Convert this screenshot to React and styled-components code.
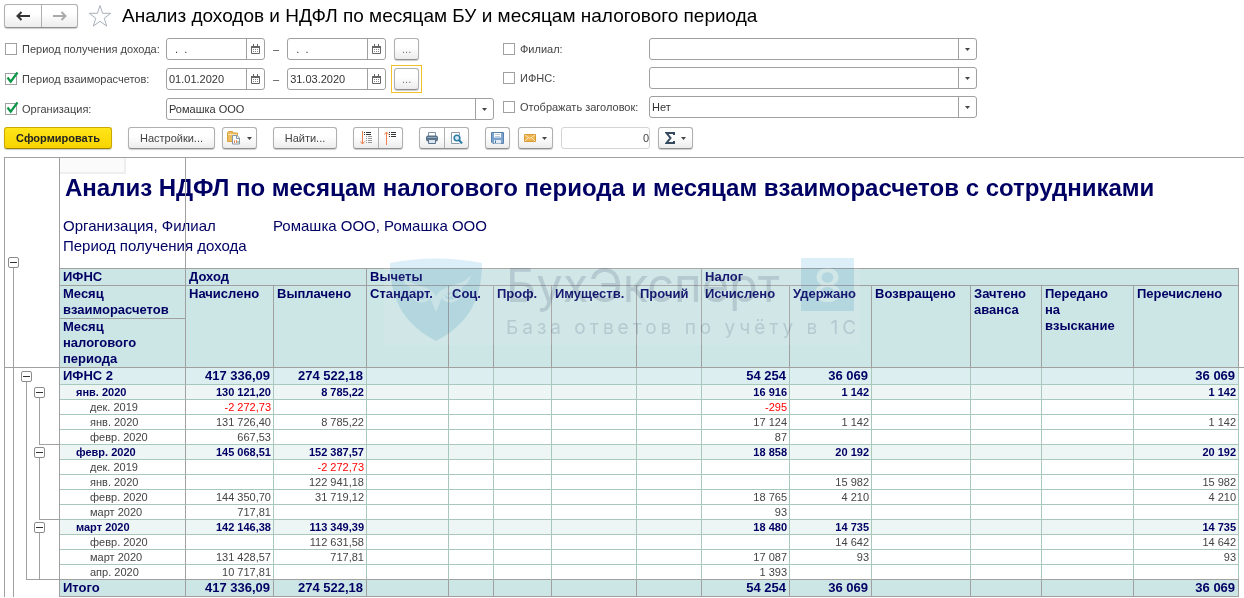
import React, { useState } from 'react';
import styled, { createGlobalStyle, css } from 'styled-components';

const GlobalStyle = createGlobalStyle`
    *, *::before, *::after {
        box-sizing: border-box;
    }

    body {
        margin: 0;
        background: #fff;
        color: #444;
        font-family: "Liberation Sans", Arial, sans-serif;
        font-size: 11px;
    }

    button, input, select {
        font: inherit;
        color: inherit;
        margin: 0;
        padding: 0;
    }
`;

const line = '#a0a0a0';
const cellLine = '#a9c8bc';
const navy = '#000064';

const Page = styled.main`
    min-height: 100vh;
    padding: 4px 0 0 4px;
`;

const TitleBar = styled.header`
    display: flex;
    align-items: center;
    height: 24px;
`;

const raised = css`
    border: 1px solid #b0b0b0;
    border-bottom-color: #8f8f8f;
    border-radius: 3px;
    background: linear-gradient(#fff 40%, #ececec);
    box-shadow: 0 1px 1px rgba(0, 0, 0, 0.2);
`;

const ButtonGroup = styled.div`
    ${raised}
    display: flex;
    height: ${({ $tall }) => ($tall ? 24 : 22)}px;

    button {
        display: flex;
        align-items: center;
        justify-content: center;
        width: ${({ $tall }) => ($tall ? 36 : 24)}px;
        border: 0;
        background: none;
    }

    button + button {
        border-left: 1px solid #b0b0b0;
    }
`;

const StarButton = styled.button`
    display: flex;
    margin: 0 10px;
    border: 0;
    background: none;
`;

const PageTitle = styled.h1`
    margin: 0;
    color: #000;
    font-size: 19px;
    font-weight: 400;
    line-height: 24px;
    white-space: nowrap;
`;

const Filters = styled.form`
    display: grid;
    grid-template-columns: 489fr 474fr;
    column-gap: 9px;
    max-width: 973px;
    padding: 10px 0 0 1px;
`;

const FilterColumn = styled.div`
    display: flex;
    flex-direction: column;
    gap: ${({ $gap }) => $gap}px;
`;

const FilterRow = styled.div`
    display: grid;
    grid-template-columns: ${({ $label }) => $label}px 1fr;
    align-items: center;
    height: 22px;
`;

const CheckLabel = styled.label`
    position: relative;
    display: flex;
    align-items: center;
    gap: 5px;
    white-space: nowrap;

    input {
        appearance: none;
        width: 12px;
        height: 12px;
        border: 1px solid ${line};
        background: #fff;
    }

    svg {
        position: absolute;
        left: 0;
        top: -2px;
        display: none;
        pointer-events: none;
    }

    input:checked ~ svg {
        display: block;
    }
`;

const Period = styled.div`
    display: flex;
    align-items: center;
    gap: 8px;
`;

const Box = styled.div`
    position: relative;
    display: flex;
    width: ${({ $width }) => $width || '100%'};
    height: 22px;
    border: 1px solid ${line};
    border-radius: 3px;
    background: #fff;
    color: #333;

    input,
    select {
        flex: 1;
        width: 0;
        min-width: 0;
        padding: 0 2px;
        border: 0;
        outline: 0;
        background: none;
    }

    select {
        appearance: none;
    }

    button {
        display: flex;
        align-items: center;
        justify-content: center;
        width: 18px;
        border: 0;
        border-left: 1px solid ${line};
        background: none;
    }
`;

const SelectArrow = styled.span`
    position: absolute;
    top: 0;
    right: 0;
    bottom: 0;
    display: flex;
    align-items: center;
    justify-content: center;
    width: 18px;
    border-left: 1px solid ${line};
    pointer-events: none;
`;

const Button = styled.button`
    ${raised}
    position: relative;
    display: flex;
    align-items: center;
    justify-content: center;
    gap: 6px;
    width: ${({ $width }) => $width}px;
    height: 22px;
    white-space: nowrap;
`;

const PickButton = styled(Button)`
    color: #777;
    line-height: 20px;

    &::after {
        content: '';
        position: absolute;
        inset: -4px;
        display: ${({ $focused }) => ($focused ? 'block' : 'none')};
        border: 1px solid #f2c029;
    }
`;

const PrimaryButton = styled(Button)`
    border-color: #c9a800;
    border-bottom-color: #9c8200;
    background: linear-gradient(#ffe51a, #f7d400);
    color: #222;
    font-weight: 700;
`;

const Toolbar = styled.div`
    display: flex;
    align-items: center;
    gap: ${({ $gap }) => $gap || 16}px;
    padding: ${({ $gap }) => ($gap ? 0 : '7px 0 8px')};
`;

const SumInput = styled.input`
    width: 89px;
    height: 22px;
    border: 1px solid #d4d4d4;
    border-radius: 3px;
    text-align: right;
`;

const Sheet = styled.section`
    display: flex;
    border-top: 1px solid ${line};
    border-left: 1px solid ${line};
`;

const Gutter = styled.div`
    display: flex;
    flex: none;
    flex-direction: column;
    width: 55px;
    border-right: 1px solid ${line};
`;

const GutterHead = styled.div`
    display: flex;
    flex-direction: column;
    height: 210px;
    padding: 99px 0 0 3px;
    border-bottom: 1px solid ${line};
`;

const Stem = styled.div`
    display: flex;
    flex: 1;
    flex-direction: column;
    margin-left: 5px;
    padding-left: 7px;
    border-left: 1px solid ${line};
    border-bottom: ${({ $foot }) => ($foot ? `1px solid ${line}` : 0)};
`;

const GutterBody = styled(Stem)`
    margin-left: 8px;
`;

const Branch = styled.div`
    display: flex;
    flex-direction: column;
    height: ${({ $height }) => $height}px;
    padding-top: ${({ $top }) => $top}px;
`;

const Nested = styled.div`
    padding-top: 3px;
`;

const Toggle = styled.button`
    display: flex;
    flex: none;
    align-items: center;
    justify-content: center;
    width: 11px;
    height: 11px;
    border: 1px solid #8c8c8c;
    border-radius: 2px;
    background: #fff;

    &::before {
        content: '';
        width: 7px;
        height: 1px;
        background: #333;
    }
`;

const Report = styled.div`
    position: relative;
    flex: 1;
    min-width: 0;
`;

const ReportHead = styled.div`
    position: relative;
    height: 110px;
    color: ${navy};
    white-space: nowrap;

    &::after {
        content: '';
        position: absolute;
        top: 0;
        bottom: 0;
        left: 125px;
        border-left: 1px solid ${line};
    }
`;

const ActiveCell = styled.div`
    width: 66px;
    height: 16px;
    border: solid #eee;
    border-width: 0 2px 2px 0;
    background: #fbfbfb;
`;

const ReportTitle = styled.h2`
    margin: 0;
    padding-left: 5px;
    font-size: 24px;
    line-height: 28px;
`;

const Params = styled.dl`
    display: grid;
    grid-template-columns: 210px 1fr;
    margin: 0;
    padding: 14px 0 0 3px;
    font-size: 15px;
    line-height: 20px;

    dt, dd {
        margin: 0;
    }
`;

const Table = styled.table`
    width: 100%;
    border-collapse: separate;
    border-spacing: 0;
    table-layout: fixed;
    color: ${navy};

    th, td {
        padding: 0 2px 0 3px;
        border: 0 solid ${cellLine};
        border-width: 0 1px 1px 0;
        white-space: nowrap;
    }
`;

const Col = styled.col`
    width: ${({ $width }) => $width}px;
`;

const Head = styled.thead`
    font-size: 13px;
    line-height: 16px;
    text-align: left;

    tr:first-child { height: 18px; }
    tr:nth-child(2) { height: 33px; }
    tr:nth-child(3) { height: 49px; }

    && th {
        padding-right: 0;
        border-color: ${line};
        background: #cce5e5;
        vertical-align: top;
        white-space: pre-line;
    }

    tr:first-child th {
        border-top-width: 1px;
    }

    && td {
        border-width: 0 0 1px;
        border-color: ${line};
    }
`;

const levels = {
    group: css`
        height: 17px;
        background: #ddeef0;
        font-size: 13px;
        font-weight: 700;
        line-height: 16px;
    `,
    month: css`
        height: 15px;
        background: #edf6f5;
        font-weight: 700;
        line-height: 14px;
    `,
    item: css`
        height: 15px;
        color: #444;
        line-height: 14px;
    `,
    total: css`
        height: 17px;
        background: #cce5e5;
        font-size: 13px;
        font-weight: 700;
        line-height: 16px;
    `,
};

const indents = { group: 3, month: 16, item: 30, total: 3 };

const Row = styled.tr`
    ${({ $level }) => levels[$level]}

    && th {
        padding-left: ${({ $level }) => indents[$level]}px;
        border-right-color: ${line};
        font-weight: inherit;
        text-align: left;
    }

    && td {
        padding-right: ${({ $level }) => ($level === 'group' || $level === 'total' ? 3 : 2)}px;
        text-align: right;
    }

    &&:nth-last-child(-n + 2) th,
    &&:nth-last-child(-n + 2) td {
        border-bottom-color: ${line};
    }

    &&:last-child td {
        border-right-color: ${line};
    }
`;

const Value = styled.td`
    color: ${({ $negative }) => ($negative ? '#f00' : 'inherit')};
`;

const Watermark = styled.div`
    position: absolute;
    top: 92px;
    left: 324px;
    display: flex;
    gap: 24px;
    width: 476px;
    height: 95px;
    padding: 8px 6px;
    background: rgba(255, 255, 255, 0.1);
    pointer-events: none;

    > * {
        mix-blend-mode: multiply;
    }

    > svg {
        flex: none;
    }
`;

const WatermarkText = styled.div`
    flex: 1;
    min-width: 0;
    color: #dcdfe6;
    font-family: Inter, sans-serif;
    white-space: nowrap;
`;

const Brand = styled.div`
    display: flex;
    justify-content: space-between;
    height: 53px;
    font-size: 47px;
    font-weight: 400;
    line-height: 53px;

    b {
        width: 53px;
        background: #dceef7;
        color: #fff;
        font-weight: 500;
        text-align: center;
    }
`;

const Slogan = styled.div`
    padding-top: 4px;
    font-size: 19px;
    line-height: 26px;
    letter-spacing: 4px;
`;

const CalendarIcon = () => (
    <svg width="9" height="10" viewBox="0 0 9 10" fill="none">
        <path d="M.5 2.500h8v7h-8z" fill="#fff" stroke="#666" />
        <path d="M0 2h9v2H0z" fill="#666" />
        <path d="M2.500 0v2M6.500 0v2" stroke="#666" />
        <path d="M2 5.500h5M2 7.500h5" stroke="#888" strokeDasharray="1 1" />
    </svg>
);

const ArrowDown = () => (
    <svg width="5" height="4" viewBox="0 0 5 4">
        <path d="M0 1h5L2.500 4z" fill="#444" />
    </svg>
);

const NavArrow = ({ color, flip }) => (
    <svg width="14" height="10" viewBox="0 0 14 10" fill="none" stroke={color} strokeWidth="2">
        {flip ? <path d="M0 5h12M8.500 1l4 4-4 4" /> : <path d="M14 5H2M5.500 1l-4 4 4 4" />}
    </svg>
);

const StarIcon = () => (
    <svg width="24" height="24" viewBox="0 0 24 24" fill="none" stroke="#a9b0b8">
        <path d="M12 1.500l2.600 7.800h8.200l-6.600 4.900 2.500 7.900-6.700-4.800-6.700 4.800 2.500-7.900-6.600-4.900h8.200z" />
    </svg>
);

const CheckIcon = () => (
    <svg width="14" height="14" viewBox="0 0 14 14" fill="none">
        <path d="M2.500 6.500l3.200 4.200L12.500 1.500" stroke="#0c9648" strokeWidth="2.200" />
    </svg>
);

const PasteIcon = () => (
    <svg width="14" height="14" viewBox="0 0 14 14" fill="none">
        <path d="M.5 1.500l1-1h4l1 1.500h4v8.500H.5z" fill="#edbd62" stroke="#d9a23f" />
        <path d="M1 3.500h9" stroke="#fbe3b0" />
        <path d="M5.500 4.500h4.500l2.500 2.500v6H5.500z" fill="#fff" stroke="#8797a8" />
        <path d="M9.500 4.500v3h3" stroke="#8797a8" />
        <path d="M7.500 12V9.500" stroke="#e07c50" />
        <path d="M9.500 12V9" stroke="#e58a60" />
        <path d="M11 12v-2" stroke="#5a9b58" />
    </svg>
);

const ExpandIcon = () => (
    <svg width="12" height="14" viewBox="0 0 12 14" fill="none">
        <path d="M2.500 0v13M.5 10.500l2 2.500 2-2.500" stroke="#f08050" />
        <path d="M4 1.500h1M6 1.500h5M4 3.500h1M6 3.500h5" stroke="#333" />
        <path d="M6 5.500h1M8 5.500h4M6 7.500h1M8 7.500h4M6 9.500h1M8 9.500h4M6 11.500h1M8 11.500h4" stroke="#999" />
    </svg>
);

const CollapseIcon = () => (
    <svg width="13" height="14" viewBox="0 0 13 14" fill="none">
        <path d="M2.500 14V1M.5 3.500l2-2.500 2 2.500" stroke="#f08050" />
        <path d="M5 1.500h1M7 1.500h5M5 3.500h1M7 3.500h5M5 5.500h1M7 5.500h5" stroke="#333" />
    </svg>
);

const PrintIcon = () => (
    <svg width="12" height="12" viewBox="0 0 12 12" fill="none">
        <path d="M2.500 4V.5h7V4" fill="#fff" stroke="#7d92a5" />
        <rect y="3.500" width="12" height="6" rx="2" fill="#5b748b" />
        <path d="M1.500 5.500h9" stroke="#8fa5b8" />
        <path d="M2.500 7.500h7v4h-7z" fill="#dbe5ee" stroke="#5b748b" />
    </svg>
);

const PreviewIcon = () => (
    <svg width="13" height="12" viewBox="0 0 13 12" fill="none">
        <path d="M9.500 3V.5h-8v11h8" fill="#fff" stroke="#8a9bab" />
        <circle cx="7" cy="6" r="2.800" fill="#d4ecf7" stroke="#2b7ca5" strokeWidth="1.600" />
        <path d="M9 8l3 3.500" stroke="#2b7ca5" strokeWidth="2" />
    </svg>
);

const SaveIcon = () => (
    <svg width="13" height="12" viewBox="0 0 13 12" fill="none">
        <path d="M.5.5h12v11H2l-1.500-1.500z" fill="#7ba3cf" stroke="#5b82ad" />
        <path d="M3 1h7v4.500H3z" fill="#fff" />
        <path d="M4 2.500h5M4 4.500h5" stroke="#bccada" />
        <path d="M3 8h7v3.500H3z" fill="#e4ebf2" />
        <path d="M4.500 8.500v2.500" stroke="#47709d" />
    </svg>
);

const MailIcon = () => (
    <svg width="12" height="8" viewBox="0 0 12 8" fill="none">
        <path d="M.5.5h11v7H.5z" fill="#f0b44f" stroke="#d79a38" />
        <path d="M1 1l5 3.500L11 1M1 7l3.500-3.500M11 7L7.500 3.500" stroke="#fce5b8" />
    </svg>
);

const SigmaIcon = () => (
    <svg width="10" height="12" viewBox="0 0 10 12" fill="none">
        <path d="M9 3V1H1.500l4 5-4 5H9V9" stroke="#34495e" strokeWidth="2" />
    </svg>
);

const OwlShield = () => (
    <svg width="92" height="84" viewBox="0 0 92 84">
        <path d="M0 5C29-1 63-1 92 5c0 40-17 63-46 78C17 68 0 45 0 5z" fill="#dceef7" />
        <g fill="none" stroke="#f4fafd" strokeWidth="3">
            <path d="M22 29c-2 8 3 14 10 14 5 0 8-4 7-8M70 29c2 8-3 14-10 14-5 0-8-4-7-8" />
            <circle cx="33" cy="35" r="3" strokeWidth="2" />
            <circle cx="59" cy="35" r="3" strokeWidth="2" />
        </g>
        <path
            d="M11 17c6 8 15 9 23 12 6 2 10 5 12 9 2-4 6-7 12-9 8-3 17-4 23-12-2 11-12 14-21 17-6 2-8 4-9 8l-5 12-5-12c-1-4-3-6-9-8-9-3-19-6-21-17z"
            fill="#f4fafd"
        />
    </svg>
);

const columns = [126, 88, 93, 82, 45, 58, 85, 65, 88, 82, 99, 71, 92, 105, 5];

const headings = [
    'Начислено', 'Выплачено', 'Стандарт.', 'Соц.', 'Проф.', 'Имуществ.', 'Прочий',
    'Исчислено', 'Удержано', 'Возвращено', 'Зачтено\nаванса', 'Передано\nна\nвзыскание', 'Перечислено',
];

// accrued, paid, calculated, withheld, transferred
const rows = [
    ['group', 'ИФНС 2', '417 336,09', '274 522,18', '54 254', '36 069', '36 069'],
    ['month', 'янв. 2020', '130 121,20', '8 785,22', '16 916', '1 142', '1 142'],
    ['item', 'дек. 2019', '-2 272,73', '', '-295', '', ''],
    ['item', 'янв. 2020', '131 726,40', '8 785,22', '17 124', '1 142', '1 142'],
    ['item', 'февр. 2020', '667,53', '', '87', '', ''],
    ['month', 'февр. 2020', '145 068,51', '152 387,57', '18 858', '20 192', '20 192'],
    ['item', 'дек. 2019', '', '-2 272,73', '', '', ''],
    ['item', 'янв. 2020', '', '122 941,18', '', '15 982', '15 982'],
    ['item', 'февр. 2020', '144 350,70', '31 719,12', '18 765', '4 210', '4 210'],
    ['item', 'март 2020', '717,81', '', '93', '', ''],
    ['month', 'март 2020', '142 146,38', '113 349,39', '18 480', '14 735', '14 735'],
    ['item', 'февр. 2020', '', '112 631,58', '', '14 642', '14 642'],
    ['item', 'март 2020', '131 428,57', '717,81', '17 087', '93', '93'],
    ['item', 'апр. 2020', '10 717,81', '', '1 393', '', ''],
    ['total', 'Итого', '417 336,09', '274 522,18', '54 254', '36 069', '36 069'],
];

const Check = ({ children, defaultChecked }) => (
    <CheckLabel>
        <input type="checkbox" defaultChecked={defaultChecked} />
        {children}
        <CheckIcon />
    </CheckLabel>
);

const DateField = ({ label, initial }) => {
    const [value, setValue] = useState(initial);

    return (
        <Box $width="99px">
            <input aria-label={label} value={value} onChange={(e) => setValue(e.target.value)} />
            <button type="button" aria-label="Выбрать дату"><CalendarIcon /></button>
        </Box>
    );
};

const SelectField = ({ label, value = '' }) => (
    <Box>
        <select aria-label={label} defaultValue={value}>
            <option value={value}>{value}</option>
        </select>
        <SelectArrow><ArrowDown /></SelectArrow>
    </Box>
);

const PeriodRow = ({ label, from, to, checked, focused }) => (
    <FilterRow $label={161}>
        <Check defaultChecked={checked}>{label}</Check>
        <Period>
            <DateField label={`${label} с`} initial={from} />
            <span>–</span>
            <DateField label={`${label} по`} initial={to} />
            <PickButton type="button" $width={25} $focused={focused}>...</PickButton>
        </Period>
    </FilterRow>
);

const Outline = () => (
    <Gutter>
        <GutterHead>
            <Toggle aria-label="Свернуть отчет" />
            <Stem />
        </GutterHead>
        <GutterBody>
            <Branch $height={212} $top={3}>
                <Toggle aria-label="Свернуть ИФНС 2" />
                <Stem $foot>
                    <Nested>
                        <Branch $height={60} $top={2}>
                            <Toggle aria-label="Свернуть янв. 2020" />
                            <Stem $foot />
                        </Branch>
                        <Branch $height={75} $top={2}>
                            <Toggle aria-label="Свернуть февр. 2020" />
                            <Stem $foot />
                        </Branch>
                        <Branch $height={59} $top={2}>
                            <Toggle aria-label="Свернуть март 2020" />
                            <Stem />
                        </Branch>
                    </Nested>
                </Stem>
            </Branch>
        </GutterBody>
    </Gutter>
);

const ReportTable = () => (
    <Table>
        <colgroup>
            {columns.map((width, i) => <Col key={i} $width={width} />)}
        </colgroup>
        <Head>
            <tr>
                <th>ИФНС</th>
                <th colSpan={2}>Доход</th>
                <th colSpan={5}>Вычеты</th>
                <th colSpan={6}>Налог</th>
                <td rowSpan={3} />
            </tr>
            <tr>
                <th>{'Месяц\nвзаиморасчетов'}</th>
                {headings.map((text) => <th key={text} rowSpan={2}>{text}</th>)}
            </tr>
            <tr>
                <th>{'Месяц\nналогового\nпериода'}</th>
            </tr>
        </Head>
        <tbody>
            {rows.map(([level, name, accrued, paid, calculated, withheld, transferred], i) => (
                <Row key={i} $level={level}>
                    <th scope="row">{name}</th>
                    {[accrued, paid, '', '', '', '', '', calculated, withheld, '', '', '', transferred].map((value, j) => (
                        <Value key={j} $negative={value.startsWith('-')}>{value}</Value>
                    ))}
                </Row>
            ))}
        </tbody>
    </Table>
);

const App = () => (
    <Page>
        <GlobalStyle />
        <TitleBar>
            <ButtonGroup $tall>
                <button type="button" aria-label="Назад"><NavArrow color="#333" /></button>
                <button type="button" aria-label="Вперед"><NavArrow color="#aaa" flip /></button>
            </ButtonGroup>
            <StarButton type="button" aria-label="В избранное"><StarIcon /></StarButton>
            <PageTitle>Анализ доходов и НДФЛ по месяцам БУ и месяцам налогового периода</PageTitle>
        </TitleBar>

        <Filters>
            <FilterColumn $gap={8}>
                <PeriodRow label="Период получения дохода:" from="  .  ." to="  .  ." />
                <PeriodRow label="Период взаиморасчетов:" from="01.01.2020" to="31.03.2020" checked focused />
                <FilterRow $label={161}>
                    <Check defaultChecked>Организация:</Check>
                    <SelectField label="Организация" value="Ромашка ООО" />
                </FilterRow>
            </FilterColumn>
            <FilterColumn $gap={7}>
                <FilterRow $label={146}>
                    <Check>Филиал:</Check>
                    <SelectField label="Филиал" />
                </FilterRow>
                <FilterRow $label={146}>
                    <Check>ИФНС:</Check>
                    <SelectField label="ИФНС" />
                </FilterRow>
                <FilterRow $label={146}>
                    <Check>Отображать заголовок:</Check>
                    <SelectField label="Отображать заголовок" value="Нет" />
                </FilterRow>
            </FilterColumn>
        </Filters>

        <Toolbar>
            <PrimaryButton type="button" $width={108}>Сформировать</PrimaryButton>
            <Toolbar $gap={7}>
                <Button type="button" $width={87}>Настройки...</Button>
                <Button type="button" $width={35} aria-label="Варианты отчета"><PasteIcon /><ArrowDown /></Button>
            </Toolbar>
            <Button type="button" $width={64}>Найти...</Button>
            <ButtonGroup>
                <button type="button" aria-label="Развернуть группы"><ExpandIcon /></button>
                <button type="button" aria-label="Свернуть группы"><CollapseIcon /></button>
            </ButtonGroup>
            <ButtonGroup>
                <button type="button" aria-label="Печать"><PrintIcon /></button>
                <button type="button" aria-label="Предварительный просмотр"><PreviewIcon /></button>
            </ButtonGroup>
            <Toolbar $gap={8}>
                <Button type="button" $width={25} aria-label="Сохранить"><SaveIcon /></Button>
                <Button type="button" $width={35} aria-label="Отправить"><MailIcon /><ArrowDown /></Button>
                <SumInput aria-label="Сумма" defaultValue="0" />
                <Button type="button" $width={35} aria-label="Итоги"><SigmaIcon /><ArrowDown /></Button>
            </Toolbar>
        </Toolbar>

        <Sheet>
            <Outline />
            <Report>
                <ReportHead>
                    <ActiveCell />
                    <ReportTitle>Анализ НДФЛ по месяцам налогового периода и месяцам взаиморасчетов с сотрудниками</ReportTitle>
                    <Params>
                        <dt>Организация, Филиал</dt>
                        <dd>Ромашка ООО, Ромашка ООО</dd>
                        <dt>Период получения дохода</dt>
                    </Params>
                </ReportHead>
                <ReportTable />
                <Watermark aria-hidden="true">
                    <OwlShield />
                    <WatermarkText>
                        <Brand>БухЭксперт<b>8</b></Brand>
                        <Slogan>База ответов по учёту в 1С</Slogan>
                    </WatermarkText>
                </Watermark>
            </Report>
        </Sheet>
    </Page>
);

export default App;
